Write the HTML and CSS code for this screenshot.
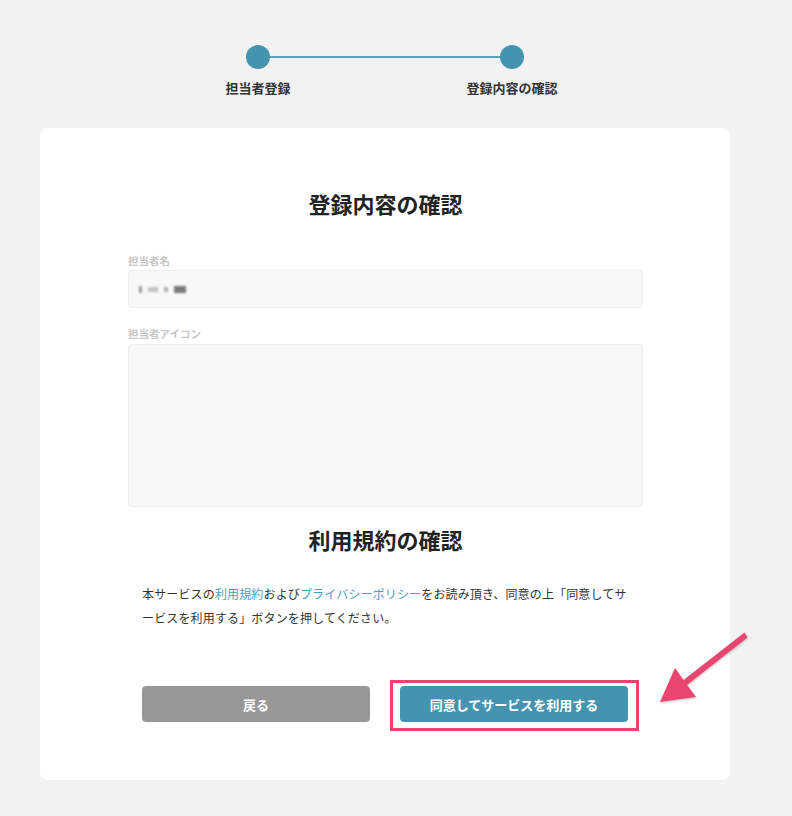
FILE: index.html
```html
<!DOCTYPE html>
<html lang="ja">
<head>
<meta charset="utf-8">
<title>登録内容の確認</title>
<link rel="stylesheet" href="styles.css">
</head>
<body>
<div class="page">
  <div class="stepper">
    <div class="track">
      <span class="dot"></span>
      <span class="line"></span>
      <span class="dot"></span>
    </div>
    <div class="labels">
      <span class="step-label">担当者登録</span>
      <span class="step-label">登録内容の確認</span>
    </div>
  </div>

  <div class="card">
    <h1 class="title">登録内容の確認</h1>

    <div class="field">
      <div class="field-label">担当者名</div>
      <div class="input">
        <span class="blur"><i class="b1"></i><i class="b2"></i><i class="b3"></i><i class="b4"></i></span>
      </div>
    </div>

    <div class="field field-icon">
      <div class="field-label">担当者アイコン</div>
      <div class="input input-tall"></div>
    </div>

    <h2 class="title title-terms">利用規約の確認</h2>

    <p class="terms">本サービスの<a class="link">利用規約</a>および<a class="link">プライバシーポリシー</a>をお読み頂き、同意の上「同意してサービスを利用する」ボタンを押してください。</p>

    <div class="actions">
      <button class="btn btn-back">戻る</button>
      <div class="highlight-wrap">
        <button class="btn btn-primary">同意してサービスを利用する</button>
        <span class="highlight"></span>
      </div>
    </div>
  </div>

  <svg class="arrow" width="110" height="84" viewBox="0 0 110 84">
    <defs>
      <filter id="sh" x="-20%" y="-20%" width="140%" height="140%">
        <feDropShadow dx="0.5" dy="1" stdDeviation="0.8" flood-color="#000" flood-opacity="0.25"/>
      </filter>
    </defs>
    <polygon filter="url(#sh)" fill="#e8456f" points="10,74 25,40 33.5,52 94.5,4.5 97.5,9.5 37,57 46,69"/>
  </svg>
</div>
</body>
</html>
```
FILE: styles.css
```css
* { box-sizing: border-box; }
html, body { margin: 0; padding: 0; }
body {
  background: #f2f2f2;
  font-family: "Noto Sans CJK JP", "Noto Sans", sans-serif;
  color: #333;
  width: 792px;
  height: 816px;
  overflow: hidden;
}
.page {
  position: relative;
  width: 690px;
  margin-left: 40px;
  padding-top: 45px;
}
.stepper {
  display: flex;
  flex-direction: column;
  align-items: center;
}
.track {
  display: flex;
  align-items: center;
  width: 278px;
}
.dot {
  width: 24px;
  height: 24px;
  border-radius: 50%;
  background: #4594af;
  flex: none;
}
.line {
  flex: 1;
  height: 2px;
  background: #5d9fb6;
}
.labels {
  display: grid;
  grid-template-columns: 120px 120px;
  column-gap: 134px;
  margin-top: 10px;
}
.step-label {
  text-align: center;
  font-size: 13px;
  font-weight: 700;
  line-height: 18px;
  color: #333;
}
.card {
  margin-top: 31px;
  background: #fff;
  border-radius: 8px;
  padding: 61px 87px 58px 88px;
}
.title {
  margin: 0;
  text-align: center;
  font-size: 22px;
  line-height: 28px;
  font-weight: 700;
  color: #222;
}
.field { margin-top: 37px; }
.field-icon { margin-top: 19px; }
.field-label {
  font-size: 10.5px;
  line-height: 14px;
  color: #c6c6c6;
  font-weight: 700;
}
.input {
  margin-top: 2px;
  height: 38px;
  background: #f8f8f8;
  border: 1px solid #efefef;
  border-radius: 4px;
  display: flex;
  align-items: center;
  padding-left: 10px;
}
.input-tall { height: 163px; margin-top: 3px; }
.blur {
  display: flex;
  align-items: center;
  gap: 6px;
  filter: blur(0.8px);
  margin-top: 1px;
}
.blur i { display: block; height: 7px; }
.b1 { width: 3px; background: #9a9a9a; }
.b2 { width: 10px; background: #c4c4c4; height: 5px !important; }
.b3 { width: 4px; background: #b0b0b0; height: 5px !important; }
.b4 { width: 12px; background: #7a7a7a; }
.title-terms { margin-top: 18px; }
.terms {
  margin: 29px 0 0;
  padding: 0 8px 0 14px;
  font-size: 12px;
  letter-spacing: 0.15px;
  line-height: 24px;
  color: #333;
}
.link { color: #4aa0bd; text-decoration: none; }
.actions {
  margin-top: 56px;
  padding: 0 14px;
  display: flex;
  gap: 30px;
}
.btn {
  width: 228px;
  height: 36px;
  border: none;
  border-radius: 4px;
  color: #fff;
  font-family: inherit;
  font-size: 13px;
  font-weight: 700;
  display: block;
}
.btn-back { background: #979797; }
.btn-primary { background: #4594af; }
.highlight-wrap { position: relative; }
.highlight {
  position: absolute;
  left: -10px;
  top: -6px;
  right: -11px;
  bottom: -9px;
  border: 3px solid #e8456f;
}
.arrow {
  position: absolute;
  left: 610px;
  top: 628px;
  overflow: visible;
}
```
